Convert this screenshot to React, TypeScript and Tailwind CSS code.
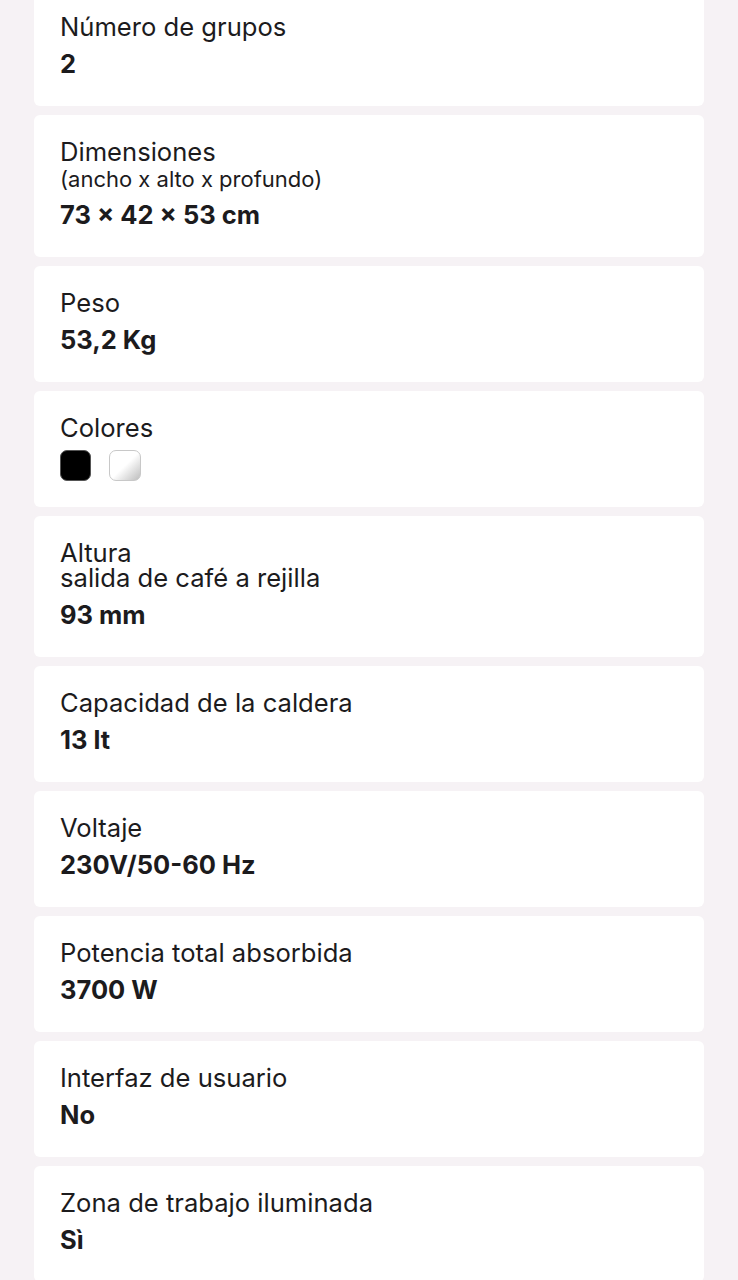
const specs: { label: string; sub?: string; value?: string; colors?: boolean }[] = [
  { label: "Número de grupos", value: "2" },
  { label: "Dimensiones", sub: "(ancho x alto x profundo)", value: "73 × 42 × 53 cm" },
  { label: "Peso", value: "53,2 Kg" },
  { label: "Colores", colors: true },
  { label: "Altura\nsalida de café a rejilla", value: "93 mm" },
  { label: "Capacidad de la caldera", value: "13 lt" },
  { label: "Voltaje", value: "230V/50-60 Hz" },
  { label: "Potencia total absorbida", value: "3700 W" },
  { label: "Interfaz de usuario", value: "No" },
  { label: "Zona de trabajo iluminada", value: "Sì" },
];

export default function App() {
  return (
    <div
      className="h-[1280px] w-full overflow-hidden bg-[#f6f2f5] pl-[34px] pr-[34px]"
      style={{ fontFamily: "Inter, 'Noto Sans', sans-serif" }}
    >
      <div className="-mt-[10px] flex flex-col gap-[9px]">
        {specs.map((s) => (
          <div
            key={s.label}
            className="flex flex-col rounded-md bg-white px-[26px] pt-[24px] pb-[26px] text-[#1c1b1d]"
          >
            <div className="whitespace-pre-line text-[25.6px] leading-[25px]">{s.label}</div>
            {s.sub && <div className="pt-[2px] text-[22px] leading-[26px]">{s.sub}</div>}
            {s.value && (
              <div className={(s.sub ? "mt-[7px]" : "mt-[9px]") + " text-[25.5px] font-bold leading-[32px]"}>
                {s.value}
              </div>
            )}
            {s.colors && (
              <div className="mt-[10px] flex gap-[18px]">
                <div className="h-[31px] w-[31px] rounded-[7px] border border-[#555] bg-black" />
                <div className="h-[31px] w-[32px] rounded-[7px] border border-[#c8c8c8] bg-gradient-to-br from-white via-white to-[#bdbdbd]" />
              </div>
            )}
          </div>
        ))}
      </div>
    </div>
  );
}
